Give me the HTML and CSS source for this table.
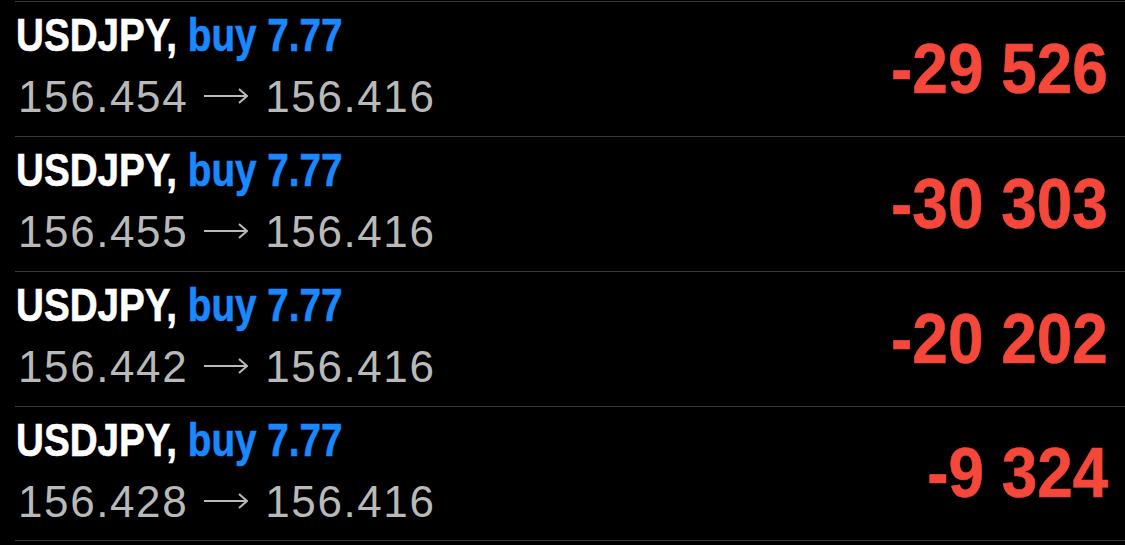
FILE: index.html
```html
<!DOCTYPE html>
<html lang="en">
<head>
    <meta charset="UTF-8">
    <meta name="viewport" content="width=device-width, initial-scale=1.0">
    <title>Positions</title>
    <link rel="stylesheet" href="styles.css">
</head>
<body>
    <ul class="positions">
        <li class="position">
            <div class="info">
                <div class="title">USDJPY, <span class="side">buy 7.77</span></div>
                <div class="prices">156.454<svg class="arrow" viewBox="0 0 44 16"><path d="M0 8H43M35 1L43 8L35 15"/></svg>156.416</div>
            </div>
            <div class="profit">-29 526</div>
        </li>
        <li class="position">
            <div class="info">
                <div class="title">USDJPY, <span class="side">buy 7.77</span></div>
                <div class="prices">156.455<svg class="arrow" viewBox="0 0 44 16"><path d="M0 8H43M35 1L43 8L35 15"/></svg>156.416</div>
            </div>
            <div class="profit">-30 303</div>
        </li>
        <li class="position">
            <div class="info">
                <div class="title">USDJPY, <span class="side">buy 7.77</span></div>
                <div class="prices">156.442<svg class="arrow" viewBox="0 0 44 16"><path d="M0 8H43M35 1L43 8L35 15"/></svg>156.416</div>
            </div>
            <div class="profit">-20 202</div>
        </li>
        <li class="position">
            <div class="info">
                <div class="title">USDJPY, <span class="side">buy 7.77</span></div>
                <div class="prices">156.428<svg class="arrow" viewBox="0 0 44 16"><path d="M0 8H43M35 1L43 8L35 15"/></svg>156.416</div>
            </div>
            <div class="profit">-9 324</div>
        </li>
    </ul>
</body>
</html>
```

FILE: styles.css
```css
:root {
    --bg-color: #000000;
    --line-color: #3a3a3c;
    --title-color: #ffffff;
    --side-color: #1a88ff;
    --price-color: #b9b9b9;
    --loss-color: #f5473a;
}

* {
    margin: 0;
    padding: 0;
    box-sizing: border-box;
}

body {
    background: var(--bg-color);
    font-family: 'Liberation Sans', Arial, sans-serif;
    padding-top: 1px;
}

.positions {
    list-style: none;
    margin-left: 15px;
}

.position {
    display: flex;
    justify-content: space-between;
    align-items: center;
    height: 135px;
    border-top: 1px solid var(--line-color);
    padding: 0 17px 2px 1px;
}

.position:last-child {
    border-bottom: 1px solid var(--line-color);
}

/* no condensed face installed, so squeeze the bold one */
.title {
    display: inline-block;
    font-weight: 700;
    font-size: 46px;
    line-height: 48px;
    color: var(--title-color);
    white-space: nowrap;
    -webkit-text-stroke: 0.6px currentColor;
    transform: scaleX(0.84);
    transform-origin: left center;
}

.side {
    color: var(--side-color);
}

.prices {
    font-size: 44px;
    line-height: 56px;
    margin-top: 10px;
    margin-left: 2px;
    color: var(--price-color);
    letter-spacing: 1.6px;
    white-space: nowrap;
}

.arrow {
    width: 44px;
    height: 16px;
    margin: 0 17px 0 16px;
    vertical-align: 8px;
    fill: none;
    stroke: var(--price-color);
    stroke-width: 2;
}

.profit {
    font-weight: 700;
    font-size: 71px;
    color: var(--loss-color);
    white-space: nowrap;
    -webkit-text-stroke: 0.6px currentColor;
    transform: scaleX(0.9);
    transform-origin: right center;
}
```
